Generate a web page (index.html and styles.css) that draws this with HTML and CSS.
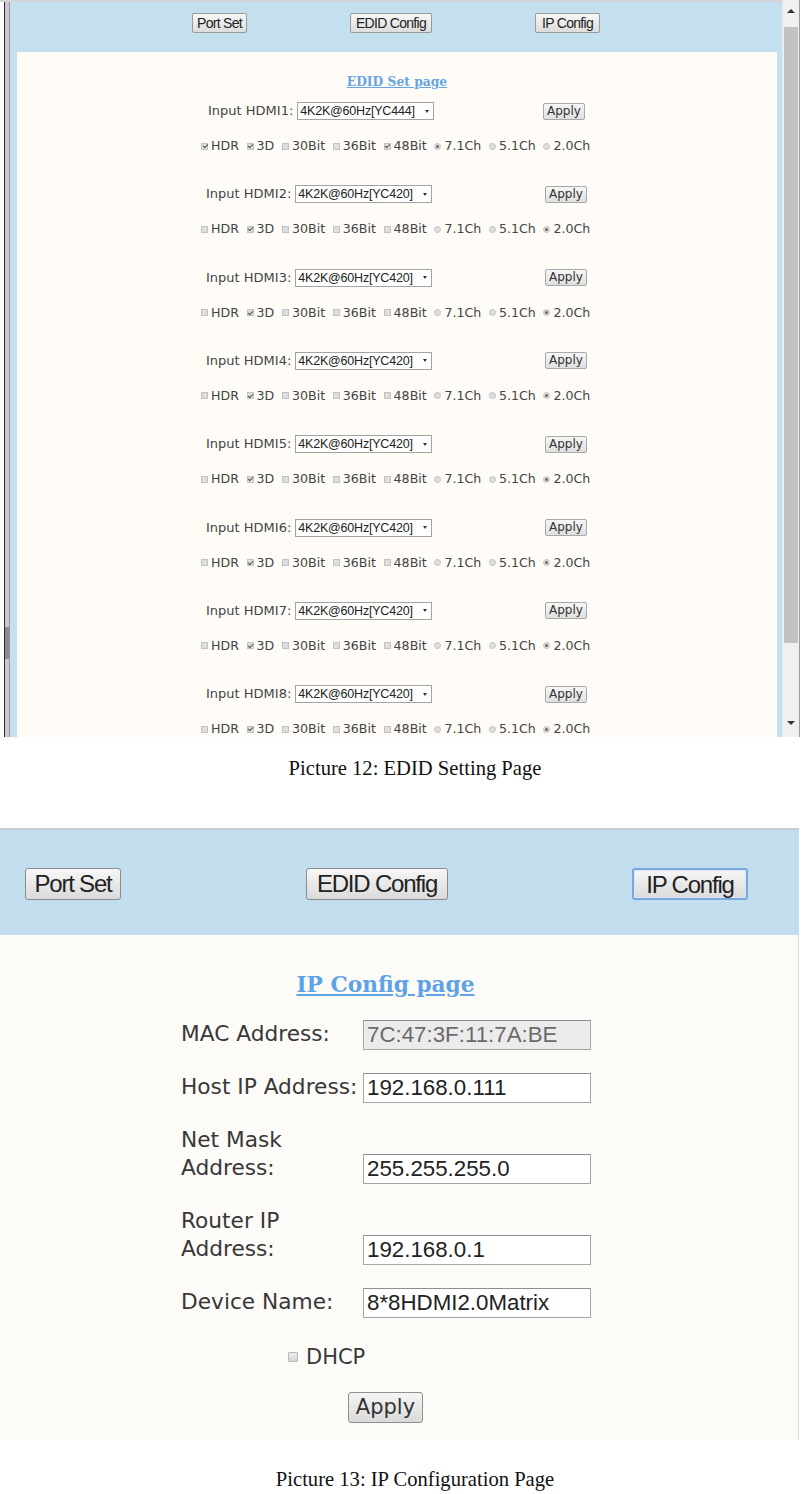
FILE: index.html
```html
<!DOCTYPE html>
<html>
<head>
<meta charset="utf-8">
<title>EDID / IP Config</title>
<link rel="stylesheet" href="styles.css">
</head>
<body>
<div class="shot shot-edid">
  <div class="lframe"></div>
  <div class="vp">
    <div class="hdr1">
      <button class="b1 w-port">Port Set</button>
      <button class="b1 w-edid">EDID Config</button>
      <button class="b1 w-ip">IP Config</button>
    </div>
    <div class="panel">
      <div class="t1"><span>EDID Set page</span></div>

      <div class="blk">
        <div class="selrow first"><span class="lab">Input HDMI1:</span><span class="sel">4K2K@60Hz[YC444]<i class="dd"></i></span><span class="ap">Apply</span></div>
        <div class="chkrow">
          <span class="it"><i class="cb on"></i>HDR</span><span class="it"><i class="cb on"></i>3D</span><span class="it"><i class="cb"></i>30Bit</span><span class="it"><i class="cb"></i>36Bit</span><span class="it"><i class="cb on"></i>48Bit</span><span class="it"><i class="rd on"></i>7.1Ch</span><span class="it"><i class="rd"></i>5.1Ch</span><span class="it"><i class="rd"></i>2.0Ch</span>
        </div>
      </div>

      <div class="blk">
        <div class="selrow"><span class="lab">Input HDMI2:</span><span class="sel">4K2K@60Hz[YC420]<i class="dd"></i></span><span class="ap">Apply</span></div>
        <div class="chkrow">
          <span class="it"><i class="cb"></i>HDR</span><span class="it"><i class="cb on"></i>3D</span><span class="it"><i class="cb"></i>30Bit</span><span class="it"><i class="cb"></i>36Bit</span><span class="it"><i class="cb"></i>48Bit</span><span class="it"><i class="rd"></i>7.1Ch</span><span class="it"><i class="rd"></i>5.1Ch</span><span class="it"><i class="rd on"></i>2.0Ch</span>
        </div>
      </div>

      <div class="blk">
        <div class="selrow"><span class="lab">Input HDMI3:</span><span class="sel">4K2K@60Hz[YC420]<i class="dd"></i></span><span class="ap">Apply</span></div>
        <div class="chkrow">
          <span class="it"><i class="cb"></i>HDR</span><span class="it"><i class="cb on"></i>3D</span><span class="it"><i class="cb"></i>30Bit</span><span class="it"><i class="cb"></i>36Bit</span><span class="it"><i class="cb"></i>48Bit</span><span class="it"><i class="rd"></i>7.1Ch</span><span class="it"><i class="rd"></i>5.1Ch</span><span class="it"><i class="rd on"></i>2.0Ch</span>
        </div>
      </div>

      <div class="blk">
        <div class="selrow"><span class="lab">Input HDMI4:</span><span class="sel">4K2K@60Hz[YC420]<i class="dd"></i></span><span class="ap">Apply</span></div>
        <div class="chkrow">
          <span class="it"><i class="cb"></i>HDR</span><span class="it"><i class="cb on"></i>3D</span><span class="it"><i class="cb"></i>30Bit</span><span class="it"><i class="cb"></i>36Bit</span><span class="it"><i class="cb"></i>48Bit</span><span class="it"><i class="rd"></i>7.1Ch</span><span class="it"><i class="rd"></i>5.1Ch</span><span class="it"><i class="rd on"></i>2.0Ch</span>
        </div>
      </div>

      <div class="blk">
        <div class="selrow"><span class="lab">Input HDMI5:</span><span class="sel">4K2K@60Hz[YC420]<i class="dd"></i></span><span class="ap">Apply</span></div>
        <div class="chkrow">
          <span class="it"><i class="cb"></i>HDR</span><span class="it"><i class="cb on"></i>3D</span><span class="it"><i class="cb"></i>30Bit</span><span class="it"><i class="cb"></i>36Bit</span><span class="it"><i class="cb"></i>48Bit</span><span class="it"><i class="rd"></i>7.1Ch</span><span class="it"><i class="rd"></i>5.1Ch</span><span class="it"><i class="rd on"></i>2.0Ch</span>
        </div>
      </div>

      <div class="blk">
        <div class="selrow"><span class="lab">Input HDMI6:</span><span class="sel">4K2K@60Hz[YC420]<i class="dd"></i></span><span class="ap">Apply</span></div>
        <div class="chkrow">
          <span class="it"><i class="cb"></i>HDR</span><span class="it"><i class="cb on"></i>3D</span><span class="it"><i class="cb"></i>30Bit</span><span class="it"><i class="cb"></i>36Bit</span><span class="it"><i class="cb"></i>48Bit</span><span class="it"><i class="rd"></i>7.1Ch</span><span class="it"><i class="rd"></i>5.1Ch</span><span class="it"><i class="rd on"></i>2.0Ch</span>
        </div>
      </div>

      <div class="blk">
        <div class="selrow"><span class="lab">Input HDMI7:</span><span class="sel">4K2K@60Hz[YC420]<i class="dd"></i></span><span class="ap">Apply</span></div>
        <div class="chkrow">
          <span class="it"><i class="cb"></i>HDR</span><span class="it"><i class="cb on"></i>3D</span><span class="it"><i class="cb"></i>30Bit</span><span class="it"><i class="cb"></i>36Bit</span><span class="it"><i class="cb"></i>48Bit</span><span class="it"><i class="rd"></i>7.1Ch</span><span class="it"><i class="rd"></i>5.1Ch</span><span class="it"><i class="rd on"></i>2.0Ch</span>
        </div>
      </div>

      <div class="blk">
        <div class="selrow"><span class="lab">Input HDMI8:</span><span class="sel">4K2K@60Hz[YC420]<i class="dd"></i></span><span class="ap">Apply</span></div>
        <div class="chkrow">
          <span class="it"><i class="cb"></i>HDR</span><span class="it"><i class="cb on"></i>3D</span><span class="it"><i class="cb"></i>30Bit</span><span class="it"><i class="cb"></i>36Bit</span><span class="it"><i class="cb"></i>48Bit</span><span class="it"><i class="rd"></i>7.1Ch</span><span class="it"><i class="rd"></i>5.1Ch</span><span class="it"><i class="rd on"></i>2.0Ch</span>
        </div>
      </div>
    </div>
  </div>
  <div class="sb">
    <div class="sb-up"><i class="tri-up"></i></div>
    <div class="sb-thumb"></div>
    <div class="sb-track"></div>
    <div class="sb-down"><i class="tri-down"></i></div>
  </div>
</div>

<p class="cap cap12">Picture 12: EDID Setting Page</p>

<div class="shot shot-ip">
  <div class="hdr2">
    <button class="b2 w2-port">Port Set</button>
    <button class="b2 w2-edid">EDID Config</button>
    <button class="b2 w2-ip focus">IP Config</button>
  </div>
  <div class="ipbody">
    <div class="t2"><span>IP Config page</span></div>
    <div class="form">
      <div class="flab">MAC Address:</div>
      <div class="fin ro">7C:47:3F:11:7A:BE</div>
      <div class="flab">Host IP Address:</div>
      <div class="fin">192.168.0.111</div>
      <div class="flab">Net Mask<br>Address:</div>
      <div class="fin">255.255.255.0</div>
      <div class="flab">Router IP<br>Address:</div>
      <div class="fin">192.168.0.1</div>
      <div class="flab">Device Name:</div>
      <div class="fin">8*8HDMI2.0Matrix</div>
    </div>
    <div class="dhcp"><i class="cb2"></i>DHCP</div>
    <button class="ap2">Apply</button>
  </div>
</div>

<p class="cap cap13">Picture 13: IP Configuration Page</p>
</body>
</html>
```

FILE: styles.css
```css
* { box-sizing: border-box; }
html, body { margin: 0; padding: 0; background: #fff; }
body { width: 803px; }

/* ---------- shot 1 : EDID ---------- */
.shot-edid {
  display: flex;
  height: 737px;
  overflow: hidden;
  padding-right: 3px;
}
.lframe {
  width: 17px;
  flex: none;
  border-top: 2px solid #d2d4d6;
  background:
    linear-gradient(#8c8a8e, #8c8a8e) 5px 625px / 4px 32px no-repeat,
    linear-gradient(to right, #fff 0 4px, #2a2a2a 4px 5px, #cdc6ce 5px 9px, #9c8ea6 9px 10px, #c4e0ee 10px 17px);
}
.vp {
  flex: 1;
  display: flex;
  flex-direction: column;
  background: #c4e0ee;
  border-top: 2px solid #d2d4d6;
  min-width: 0;
}
.hdr1 {
  height: 50px;
  flex: none;
  display: flex;
  align-items: flex-start;
  padding: 11px 0 0 175px;
  gap: 103px;
}
.b1 {
  appearance: none;
  height: 20px;
  padding: 0;
  border: 1px solid #9a9a9a;
  border-radius: 2px;
  background: linear-gradient(#f7f7f7, #dcdcdc);
  font: 14px/18px "Liberation Sans", Arial, sans-serif;
  letter-spacing: -0.7px;
  color: #222;
  text-align: center;
}
.w-port { width: 55px; }
.w-edid { width: 82px; }
.w-ip { width: 65px; }

.panel {
  flex: 1;
  margin-right: 5px;
  background: #fffcf7;
  overflow: hidden;
  padding-top: 20px;
}
.t1 {
  text-align: center;
  height: 18px;
  line-height: 18px;
  margin-bottom: 12px;
}
.t1 span {
  font: bold 12.3px/18px "DejaVu Serif", "Liberation Serif", serif;
  color: #66a4e4;
  text-decoration: underline;
}
.blk { height: 83.33px; }
.selrow {
  display: flex;
  align-items: center;
  height: 18px;
  margin-left: 189px;
  width: 381px;
}
.selrow.first { margin-left: 191px; width: 377px; }
.lab {
  font: 13px/18px "DejaVu Sans", Verdana, sans-serif;
  color: #444;
}
.sel {
  display: flex;
  align-items: center;
  margin-left: 4px;
  width: 137px;
  height: 18px;
  padding-left: 2px;
  border: 1px solid #a3a3a3;
  background: #fff;
  font: 12.5px/16px "Liberation Sans", Arial, sans-serif;
  letter-spacing: -0.2px;
  color: #222;
}
.dd {
  margin-left: auto;
  margin-right: 4px;
  width: 0;
  height: 0;
  border-left: 2px solid transparent;
  border-right: 2px solid transparent;
  border-top: 3px solid #333;
}
.ap {
  margin-left: auto;
  width: 42px;
  height: 17px;
  border: 1px solid #a8a8a8;
  border-radius: 2px;
  background: linear-gradient(#f6f6f6, #dfdfdf);
  font: 12px/15px "DejaVu Sans", Verdana, sans-serif;
  color: #333;
  text-align: center;
}
.chkrow {
  display: flex;
  align-items: center;
  gap: 7.7px;
  height: 14px;
  margin: 19px 0 0 184px;
}
.it {
  display: inline-flex;
  align-items: center;
  font: 12.6px/14px "DejaVu Sans", Verdana, sans-serif;
  color: #444;
}
.cb, .rd {
  position: relative;
  display: inline-block;
  width: 7px;
  height: 7px;
  margin-right: 3px;
  border: 1px solid #c2c2c2;
  background: #dedede;
}
.rd { border-radius: 50%; }
.cb.on::after {
  content: "";
  position: absolute;
  left: 1.5px;
  top: -0.5px;
  width: 2px;
  height: 4px;
  border: solid #555;
  border-width: 0 1px 1px 0;
  transform: rotate(45deg);
}
.rd.on::after {
  content: "";
  position: absolute;
  left: 1px;
  top: 1px;
  width: 3px;
  height: 3px;
  border-radius: 50%;
  background: #666;
}

.sb {
  width: 18px;
  flex: none;
  display: flex;
  flex-direction: column;
  background: #f0f0f0;
  border-left: 1px solid #e6e6e6;
  border-right: 1px solid #9c9c9c;
}
.sb-up { height: 26px; display: flex; justify-content: center; padding-top: 9px; }
.sb-thumb { height: 616px; margin: 1px 1px 0 1px; background: #c2c2c2; }
.sb-track { flex: 1; }
.sb-down { height: 22px; display: flex; justify-content: center; padding-top: 6px; }
.tri-up {
  width: 0; height: 0;
  border-left: 4px solid transparent;
  border-right: 4px solid transparent;
  border-bottom: 4px solid #333;
}
.tri-down {
  width: 0; height: 0;
  border-left: 4px solid transparent;
  border-right: 4px solid transparent;
  border-top: 4px solid #333;
}

/* ---------- captions ---------- */
.cap {
  margin: 0;
  padding-left: 27px;
  text-align: center;
  font: 20.6px/24px "Liberation Serif", "Times New Roman", serif;
  color: #111;
}
.cap12 { margin-top: 19px; }
.cap13 { margin-top: 27px; }

/* ---------- shot 2 : IP ---------- */
.shot-ip {
  margin-top: 48px;
  width: 799px;
  border-top: 2px solid #c6ccd2;
}
.hdr2 {
  height: 105px;
  background: #c2deee;
  display: flex;
  align-items: flex-start;
  padding: 38px 0 0 25px;
  gap: 185px;
}
.b2 {
  appearance: none;
  height: 32px;
  padding: 0;
  border: 1px solid #8c8c8c;
  border-radius: 3px;
  background: linear-gradient(#f7f7f7, #dadada);
  font: 24px/30px "Liberation Sans", Arial, sans-serif;
  letter-spacing: -1.2px;
  color: #222;
  text-align: center;
}
.w2-port { width: 96px; }
.w2-edid { width: 142px; }
.w2-ip { width: 116px; margin-left: -1px; }
.b2.focus {
  border: 2px solid #79a7de;
  box-shadow: inset 0 0 0 1px #d8e6f5;
}
.ipbody {
  height: 505px;
  background: #fdfbf8;
  border-right: 1px solid #dcdcdc;
  padding-top: 37px;
}
.t2 {
  text-align: center;
  padding-right: 27px;
  height: 26px;
}
.t2 span {
  font: bold 21.7px/26px "DejaVu Serif", "Liberation Serif", serif;
  color: #5fa3e6;
  text-decoration: underline;
}
.form {
  display: grid;
  grid-template-columns: 182px 228px;
  row-gap: 23px;
  align-items: end;
  margin: 22px 0 0 181px;
}
.flab {
  font: 21.7px/28px "DejaVu Sans", Verdana, sans-serif;
  padding-bottom: 2px;
  color: #383838;
  white-space: nowrap;
}
.fin {
  height: 30px;
  border: 1px solid #a6a6a6;
  border-top-color: #8f8f8f;
  background: #fff;
  padding-left: 3px;
  font: 22.3px/28px "Liberation Sans", Arial, sans-serif;
  color: #222;
}
.fin.ro {
  background: #ebebeb;
  color: #6a6a6a;
}
.dhcp {
  display: flex;
  align-items: center;
  height: 28px;
  margin: 25px 0 0 288px;
  font: 21px/28px "DejaVu Sans", Verdana, sans-serif;
  color: #383838;
}
.cb2 {
  display: inline-block;
  width: 10px;
  height: 10px;
  margin-right: 8px;
  border: 1px solid #b6b6b6;
  border-radius: 1px;
  background: linear-gradient(#eeeeee, #d6d6d6);
}
.ap2 {
  appearance: none;
  display: block;
  margin: 21px 0 0 348px;
  width: 75px;
  height: 31px;
  padding: 0;
  border: 1px solid #8f8f8f;
  border-radius: 3px;
  background: linear-gradient(#f6f6f6, #d9d9d9);
  font: 21px/29px "DejaVu Sans", Verdana, sans-serif;
  color: #333;
  text-align: center;
}
```
